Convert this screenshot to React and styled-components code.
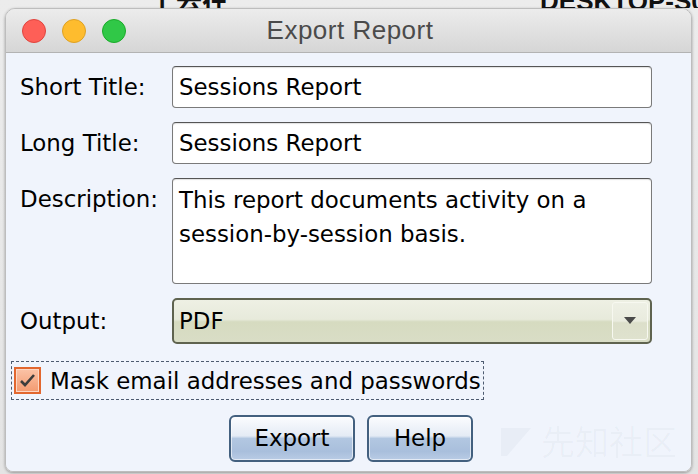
import React from "react";
import styled, { createGlobalStyle } from "styled-components";

const GlobalStyle = createGlobalStyle`
  html, body { margin: 0; padding: 0; }
  body {
    background: #e9e9e9;
    font-family: "DejaVu Sans", Verdana, sans-serif;
  }
`;

const Desktop = styled.div`
  width: 698px;
  height: 474px;
  overflow: hidden;
  position: relative;
  background: linear-gradient(#ececec, #e4e4e4);
`;

const BackdropStrip = styled.div`
  height: 8px;
  overflow: hidden;
  display: flex;
  align-items: flex-end;
`;

const BackdropText = styled.div`
  display: flex;
  flex-shrink: 0;
  margin-bottom: -6px;
  padding-left: ${(p) => p.$left}px;
  font-size: 26px;
  font-weight: bold;
  line-height: 26px;
  color: #111;
  font-family: "Liberation Sans", "Noto Sans CJK SC", sans-serif;
  white-space: nowrap;
`;

const Window = styled.div`
  margin-left: 5px;
  width: 687px;
  height: 464px;
  box-sizing: border-box;
  border: 1px solid #bdbdbd;
  border-radius: 10px 10px 8px 8px;
  overflow: hidden;
  display: flex;
  flex-direction: column;
  box-shadow: 0 1px 3px rgba(0, 0, 0, 0.35);
  position: relative;
`;

const TitleBar = styled.div`
  height: 43px;
  flex-shrink: 0;
  border-bottom: 1px solid #b3b3b3;
  background: linear-gradient(#ececec, #d6d6d6);
  display: grid;
  grid-template-columns: 1fr auto 1fr;
  align-items: center;
`;

const Lights = styled.div`
  display: flex;
  gap: 16px;
  padding-left: 16px;
  padding-top: 1px;
`;

const Light = styled.span`
  width: 24px;
  height: 24px;
  border-radius: 50%;
  box-sizing: border-box;
  background: ${(p) => p.$color};
  border: 1px solid ${(p) => p.$edge};
`;

const Title = styled.div`
  font-family: "Liberation Sans", Arial, sans-serif;
  font-size: 26px;
  color: #4b4b4b;
  padding-left: 3px;
  letter-spacing: 0.5px;
`;

const Content = styled.div`
  flex: 1;
  background: #f0f4fc;
  display: flex;
  flex-direction: column;
  font-size: 22.9px;
  color: #000;
`;

const Form = styled.div`
  display: grid;
  grid-template-columns: 152px 480px;
  row-gap: 14px;
  padding: 13px 0 0 14px;
`;

const Label = styled.div`
  align-self: ${(p) => (p.$top ? "start" : "center")};
  padding-top: ${(p) => (p.$top ? "5px" : "0")};
  white-space: nowrap;
  line-height: 32px;
`;

const TextField = styled.div`
  height: ${(p) => p.$h || 42}px;
  box-sizing: border-box;
  border: 1px solid #7a7a7a;
  border-top-color: #555;
  border-radius: 4px;
  background: #fff;
  box-shadow: inset 0 1px 1px rgba(0, 0, 0, 0.12);
  padding: 0 6px;
  display: flex;
  align-items: center;
  white-space: nowrap;
`;

const TextArea = styled(TextField)`
  align-items: flex-start;
  padding-top: 4px;
  line-height: 34px;
  white-space: normal;
`;

const Select = styled.div`
  height: 46px;
  box-sizing: border-box;
  border: 2px solid #5f634f;
  border-radius: 5px;
  background: linear-gradient(#eef0e4 0%, #e7eadb 46%, #d6dbc0 52%, #d9ddc6 100%);
  display: flex;
  align-items: center;
  padding-left: 5px;
  padding-right: 2px;
`;

const SelectValue = styled.span`
  flex: 1;
`;

const ArrowBox = styled.div`
  width: 36px;
  height: 38px;
  box-sizing: border-box;
  border: 1px solid #f7f8f0;
  border-radius: 3px;
  background: linear-gradient(#eef0e5 0%, #e9ebde 50%, #dcdfca 55%, #dfe2ce 100%);
  display: flex;
  align-items: center;
  justify-content: center;
`;

const CheckRow = styled.div`
  margin: 17px 0 0 5px;
  align-self: flex-start;
  display: inline-flex;
  align-items: center;
  gap: 9px;
  height: 39px;
  box-sizing: border-box;
  border: 1px dashed #4d5b70;
  padding: 0 2px 0 2px;
`;

const CheckBox = styled.span`
  width: 27px;
  height: 27px;
  box-sizing: border-box;
  border: 2px solid #e2672f;
  background: linear-gradient(#fbc3a7, #f39a70);
  box-shadow: inset 0 0 0 1px #fcd6c3;
  display: flex;
  align-items: center;
  justify-content: center;
`;

const CheckText = styled.span`
  white-space: nowrap;
  line-height: 30px;
`;

const ButtonRow = styled.div`
  margin-top: 15px;
  display: flex;
  justify-content: center;
  gap: 12px;
  padding-left: 5px;
`;

const Button = styled.div`
  width: ${(p) => p.$w}px;
  height: 47px;
  box-sizing: border-box;
  border: 2px solid #43607f;
  border-radius: 6px;
  background: linear-gradient(
    #fbfcfe 0%,
    #e4ebf5 44%,
    #b2c7e1 50%,
    #a9bfdc 80%,
    #b9cce5 100%
  );
  box-shadow: inset 0 0 0 1px rgba(255, 255, 255, 0.6);
  display: flex;
  align-items: center;
  justify-content: center;
  padding-bottom: 2px;
`;

const Watermark = styled.div`
  position: absolute;
  right: 14px;
  bottom: 6px;
  display: flex;
  align-items: center;
  gap: 8px;
  font-size: 34px;
  color: rgba(40, 60, 90, 0.035);
  font-family: "Noto Sans CJK SC", sans-serif;
  pointer-events: none;
`;

export default function App() {
  return (
    <>
      <GlobalStyle />
      <Desktop>
        <BackdropStrip>
          <BackdropText $left={150}>上去在</BackdropText>
          <BackdropText $left={312}>DESKTOP-S02</BackdropText>
        </BackdropStrip>
        <Window>
          <TitleBar>
            <Lights>
              <Light $color="#fe5f57" $edge="#e0443e" />
              <Light $color="#febc2e" $edge="#dea123" />
              <Light $color="#30c847" $edge="#1aab29" />
            </Lights>
            <Title>Export Report</Title>
            <div />
          </TitleBar>
          <Content>
            <Form>
              <Label>Short Title:</Label>
              <TextField>Sessions Report</TextField>
              <Label>Long Title:</Label>
              <TextField>Sessions Report</TextField>
              <Label $top>Description:</Label>
              <TextArea $h={106}>
                This report documents activity on a session-by-session basis.
              </TextArea>
              <Label>Output:</Label>
              <Select>
                <SelectValue>PDF</SelectValue>
                <ArrowBox>
                  <svg width="12" height="8" viewBox="0 0 12 8">
                    <path d="M0 0 H12 L6 7 Z" fill="#4a4a4a" />
                  </svg>
                </ArrowBox>
              </Select>
            </Form>
            <CheckRow>
              <CheckBox>
                <svg width="17" height="15" viewBox="0 0 17 15">
                  <path
                    d="M2 8 L6 12 L15 2"
                    fill="none"
                    stroke="#3c3c3c"
                    strokeWidth="2.6"
                  />
                </svg>
              </CheckBox>
              <CheckText>Mask email addresses and passwords</CheckText>
            </CheckRow>
            <ButtonRow>
              <Button $w={126}>Export</Button>
              <Button $w={106}>Help</Button>
            </ButtonRow>
          </Content>
          <Watermark>
            <svg width="34" height="34" viewBox="0 0 34 34">
              <path d="M2 4 H32 L8 32 H2 Z" fill="currentColor" />
            </svg>
            先知社区
          </Watermark>
        </Window>
      </Desktop>
    </>
  );
}
